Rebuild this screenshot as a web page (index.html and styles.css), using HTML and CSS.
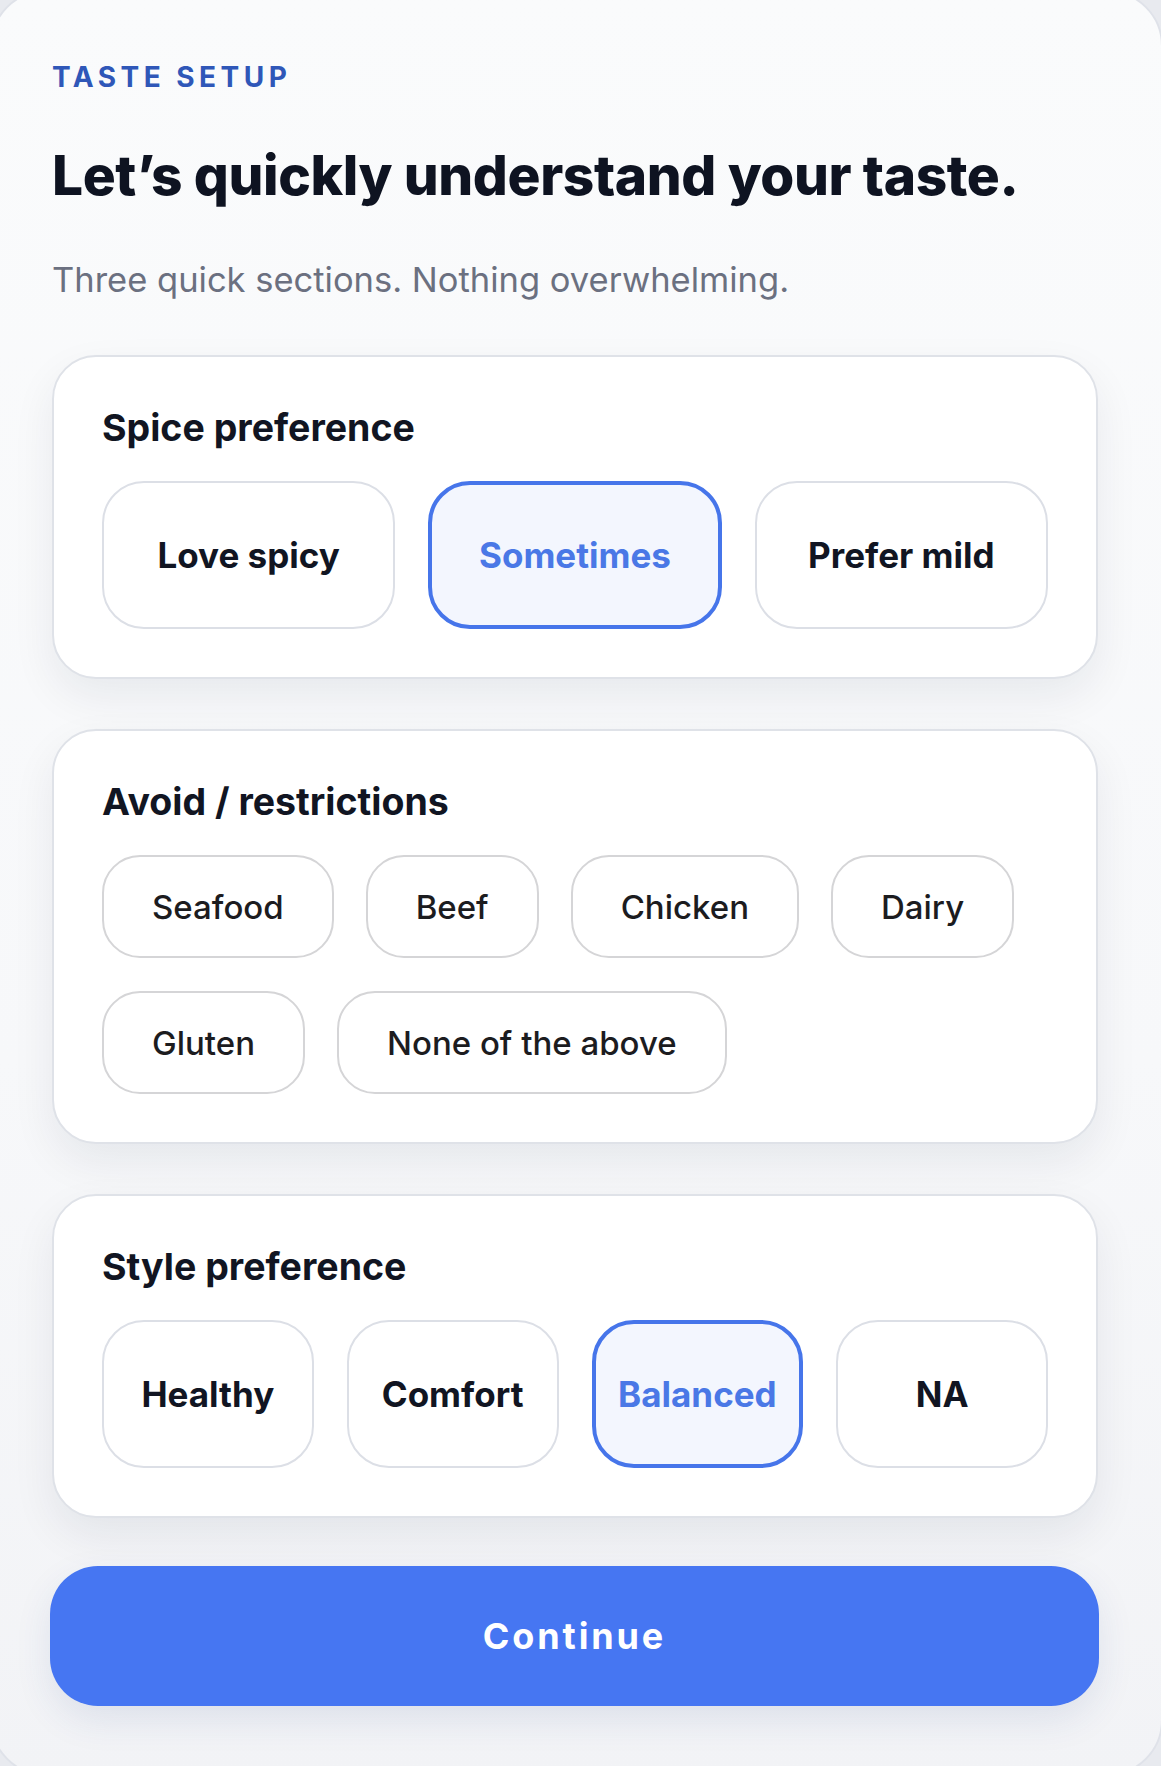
FILE: index.html
```html
<!DOCTYPE html>
<html lang="en">
<head>
    <meta charset="UTF-8">
    <meta name="viewport" content="width=device-width, initial-scale=1.0">
    <title>Taste setup</title>

<!--Estilos (CSS)-->
<link rel="stylesheet" href="styles.css">

</head>
<body>
    <div class="folha">
        <div class="conteudo">
            <p class="sobretitulo">TASTE SETUP</p>
            <h1 class="titulo">Let’s quickly understand your taste.</h1>
            <p class="subtitulo">Three quick sections. Nothing overwhelming.</p>

            <!--Pimenta-->
            <div class="cartao">
                <h2 class="cartao-titulo">Spice preference</h2>
                <div class="opcoes opcoes-3">
                    <a class="opcao">Love spicy</a>
                    <a class="opcao selecionado">Sometimes</a>
                    <a class="opcao">Prefer mild</a>
                </div>
            </div>

            <!--Restricoes-->
            <div class="cartao">
                <h2 class="cartao-titulo">Avoid / restrictions</h2>
                <div class="chips">
                    <a class="chip">Seafood</a>
                    <a class="chip">Beef</a>
                    <a class="chip">Chicken</a>
                    <a class="chip">Dairy</a>
                    <a class="chip">Gluten</a>
                    <a class="chip">None of the above</a>
                </div>
            </div>

            <!--Estilo-->
            <div class="cartao">
                <h2 class="cartao-titulo">Style preference</h2>
                <div class="opcoes opcoes-4">
                    <a class="opcao">Healthy</a>
                    <a class="opcao">Comfort</a>
                    <a class="opcao selecionado">Balanced</a>
                    <a class="opcao">NA</a>
                </div>
            </div>

            <a class="botao">Continue</a>
        </div>
    </div>
</body>
</html>
```

FILE: styles.css
```css
* {
    font-family: Inter, "Noto Sans", Arial, sans-serif;
    box-sizing: border-box;
    cursor: default;
}

body {
    margin: 0;
    background-color: #e8eaef;
    overflow: hidden;
}

.folha {
    margin: -10px -2px -10px -10px;
    height: 1786px;
    border: 2px solid #dfe2e9;
    border-radius: 56px;
    background: linear-gradient(180deg, #fafbfc 0%, #f7f8fa 60%, #f2f3f6 100%);
    padding: 0 0 0 60px;
}

.conteudo {
    width: 1046px;
}

.sobretitulo {
    margin: 0;
    padding-top: 68px;
    font-size: 28px;
    font-weight: 700;
    letter-spacing: 0.16em;
    color: #2f57b8;
}

.titulo {
    margin: 48px 0 0 0;
    font-size: 55px;
    font-weight: 800;
    letter-spacing: -0.4px;
    color: #0e1321;
}

.subtitulo {
    margin: 51px 0 0 0;
    font-size: 34.5px;
    font-weight: 400;
    color: #6b7080;
}

.cartao {
    margin-top: 55px;
    background-color: #fff;
    border: 2px solid #dfe2e8;
    border-radius: 44px;
    padding: 48px;
    box-shadow: 0 18px 44px rgba(20, 28, 50, 0.07);
}

.cartao + .cartao {
    margin-top: 50px;
}

.cartao-titulo {
    margin: 0 0 31px 0;
    font-size: 37.5px;
    font-weight: 700;
    color: #111522;
}

.opcoes {
    display: grid;
    gap: 33px;
}

.opcoes-3 {
    grid-template-columns: repeat(3, 1fr);
}

.opcoes-4 {
    grid-template-columns: repeat(4, 1fr);
}

.opcao {
    display: block;
    text-align: center;
    padding: 51px 0;
    font-size: 35px;
    font-weight: 700;
    color: #111522;
    border: 2px solid #dcdfe6;
    border-radius: 42px;
    background-color: #fff;
}

.opcao.selecionado {
    border: 4px solid #4675ea;
    padding: 49px 0;
    background-color: #f3f6fe;
    color: #4a78e6;
}

.chips {
    display: flex;
    flex-wrap: wrap;
    gap: 33px 32px;
}

.chip {
    display: block;
    padding: 29.5px 48px;
    font-size: 33px;
    font-weight: 500;
    color: #1c1c1f;
    border: 2px solid #d5d5d7;
    border-radius: 38px;
    background-color: #fff;
}

.botao {
    display: block;
    margin: 48px -1px 0 -2px;
    padding: 48px 0;
    text-align: center;
    font-size: 36px;
    font-weight: 700;
    letter-spacing: 0.08em;
    color: #fff;
    background-color: #4676f2;
    border-radius: 48px;
    box-shadow: 0 14px 36px rgba(40, 70, 140, 0.10);
}
```
